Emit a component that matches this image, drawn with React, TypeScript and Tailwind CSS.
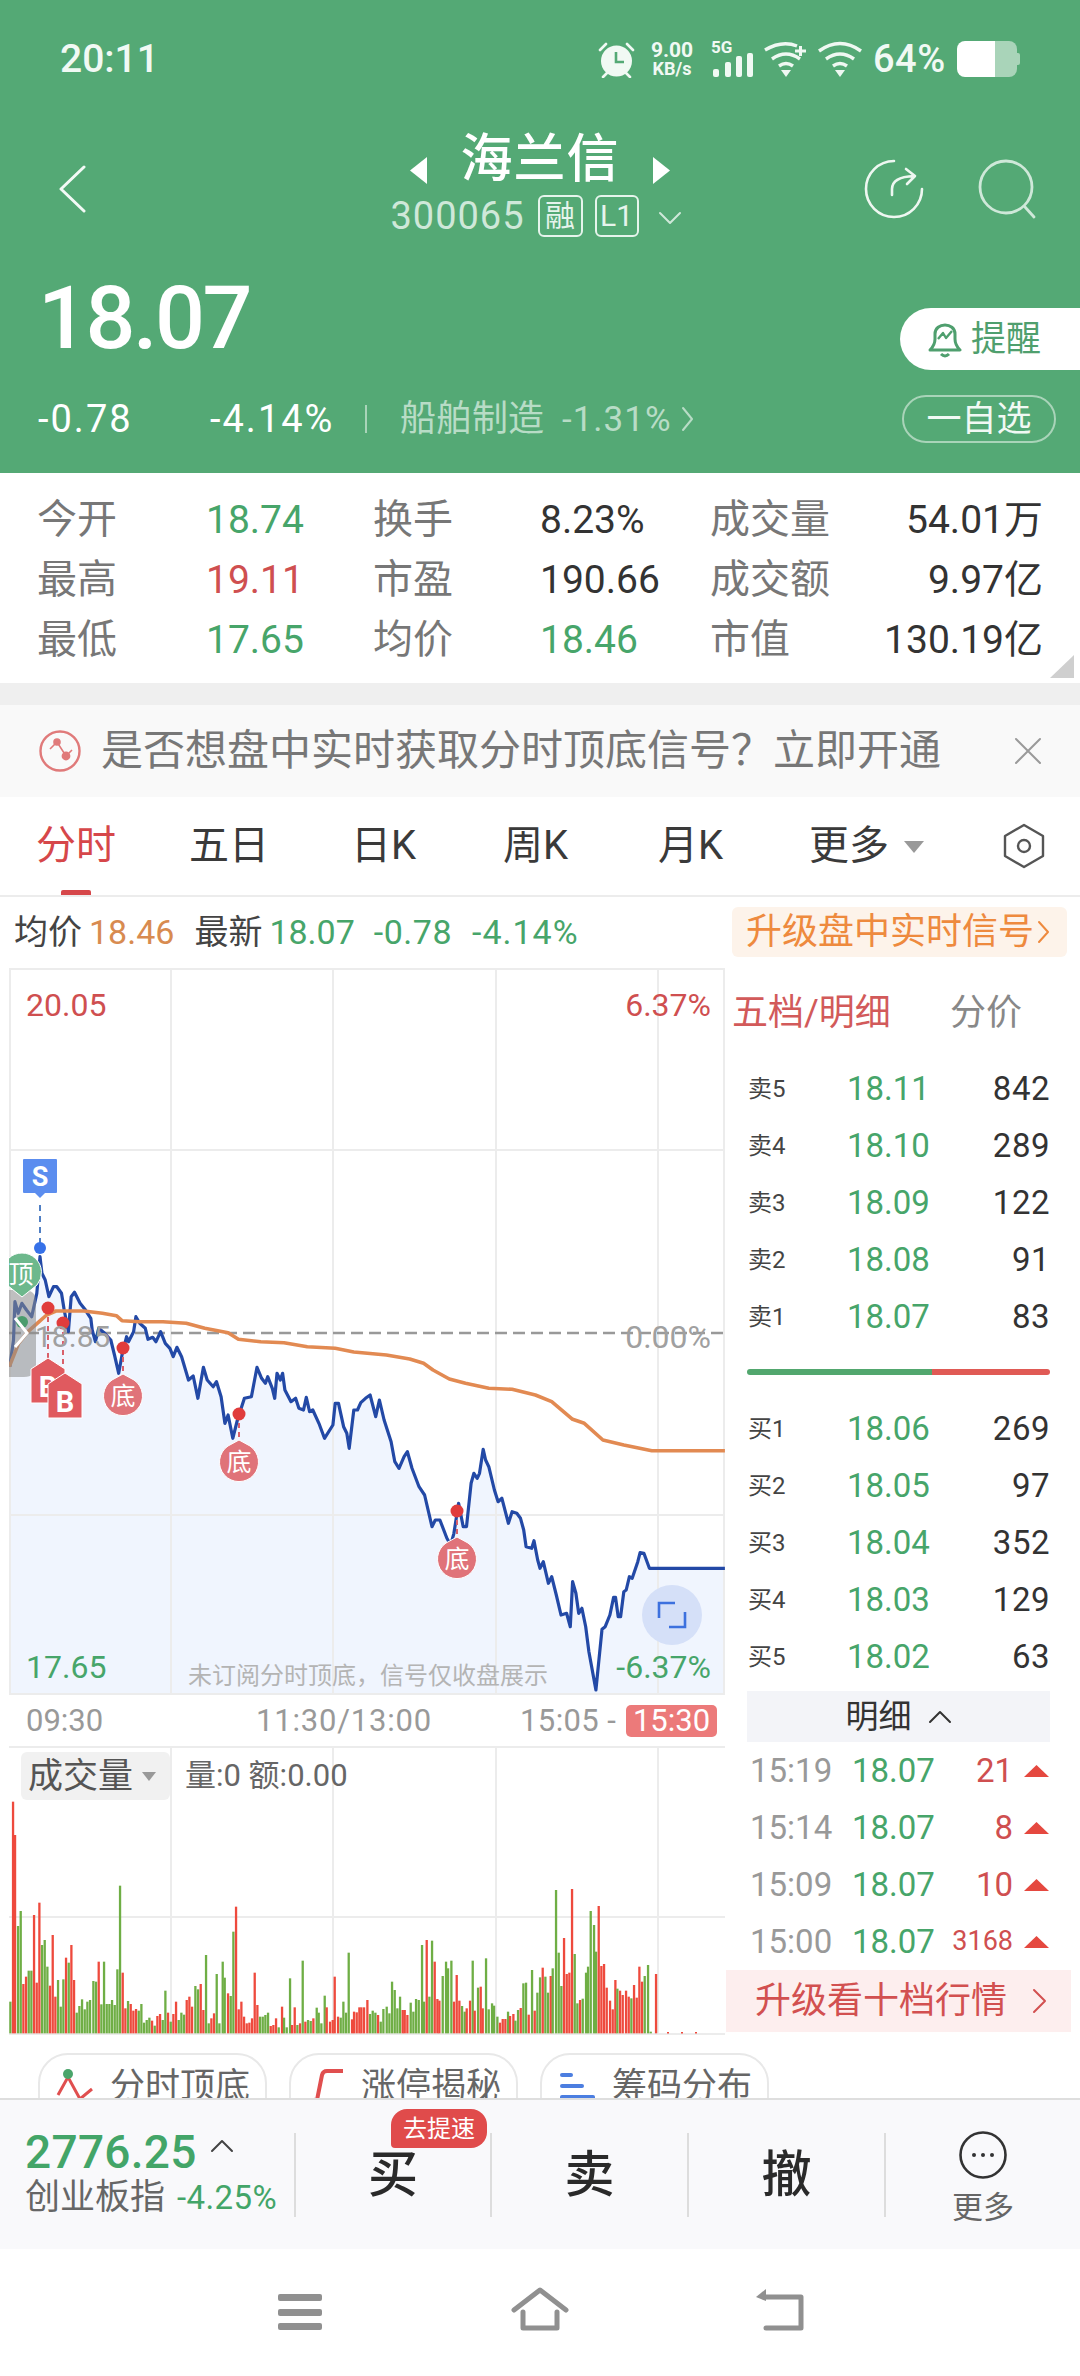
import type { FC, ReactNode } from 'react'

const GREEN = 'text-[#47a56a]'
const RED = 'text-[#cf4f50]'

// Intraday price and average curves, in plot units (x / 2.148, y / 3 + 1260 gives pixels)
const PRICE: [number, number][] = [
    [21, 320], [29, 240], [32, 125], [39, 160], [47, 130], [57, 150], [68, 170], [79, 100], [86, -10], [90, 40], [97, 60], [105, 110], [115, 80],
    [122, 80], [132, 100], [138, 150], [147, 215], [153, 110], [160, 97], [172, 130], [182, 147], [195, 175], [198, 210], [205, 245], [212, 205],
    [225, 220], [238, 240], [246, 285], [255, 340], [262, 285], [272, 230], [276, 245], [287, 215], [292, 170], [300, 190], [312, 205], [318, 238],
    [328, 232], [335, 245], [345, 215], [355, 250], [365, 265], [372, 290], [380, 262], [390, 290], [405, 360], [415, 348], [425, 415], [437, 322],
    [445, 360], [458, 380], [465, 365], [475, 410], [483, 490], [490, 465], [500, 535], [510, 480], [525, 415], [540, 410], [552, 322], [562, 355],
    [570, 370], [575, 350], [585, 385], [590, 415], [595, 340], [602, 360], [607, 340], [612, 390], [625, 425], [635, 415], [642, 445], [652, 450],
    [658, 412], [665, 455], [672, 450], [685, 490], [697, 535], [715, 495], [720, 430], [727, 430], [738, 500], [745, 520], [750, 565], [760, 450],
    [768, 450], [775, 428], [785, 415], [795, 405], [807, 470], [815, 420], [825, 480], [840, 545], [848, 605], [857, 625], [868, 590], [875, 575],
    [885, 625], [900, 680], [912, 705], [928, 800], [935, 780], [945, 780], [960, 835], [968, 855], [975, 820], [985, 730], [995, 800], [1002, 800],
    [1012, 670], [1018, 640], [1025, 655], [1030, 640], [1038, 568], [1043, 600], [1050, 620], [1062, 690], [1070, 725], [1078, 715], [1092, 790],
    [1100, 755], [1110, 760], [1118, 775], [1125, 810], [1130, 860], [1142, 865], [1147, 842], [1155, 900], [1160, 925], [1167, 905], [1178, 970],
    [1185, 950], [1195, 1005], [1205, 1065], [1217, 1060], [1225, 1100], [1230, 965], [1237, 1000], [1243, 1060], [1250, 1045], [1258, 1100],
    [1265, 1175], [1280, 1290], [1293, 1108], [1300, 1100], [1310, 1065], [1318, 1012], [1322, 1012], [1328, 1070], [1333, 1070], [1340, 995],
    [1345, 990], [1352, 950], [1358, 955], [1370, 905], [1375, 878], [1383, 880], [1395, 925], [1557, 925],
]

const AVERAGE: [number, number][] = [
    [20, 320], [40, 250], [60, 215], [80, 190], [100, 165], [120, 153], [180, 153], [220, 160], [250, 167], [262, 182], [300, 185], [350, 185],
    [400, 190], [440, 205], [490, 218], [512, 238], [560, 245], [610, 248], [660, 260], [720, 265], [760, 276], [830, 285], [880, 297], [910, 310],
    [930, 330], [965, 357], [1000, 370], [1050, 385], [1100, 388], [1150, 405], [1185, 425], [1230, 478], [1255, 490], [1295, 540], [1340, 555],
    [1400, 572], [1557, 572],
]

// Volume bars as colour, x and top edge, in thirds of a pixel from (0, 1720)
const VOLUME = `g31,845 r39,245 r45,345 g54,618 g62,573 r70,792 r78,770 g86,752 g94,752 r102,585 r110,788 r118,548 g126,675 g134,660 g142,740
r150,797 r158,645 r166,830 g174,780 g182,860 g190,778 r198,713 g206,728 r214,675 r222,780 g230,878 g238,858 g246,838 g254,868 g262,845 g270,840
g280,783 g288,785 r296,725 g304,853 g312,725 g320,852 g328,852 g336,840 g344,855 g352,748 g360,497 r368,758 r376,865 g384,843 r392,852 r400,872
r408,867 g416,872 g424,852 g432,908 g440,900 g448,893 r456,902 g464,917 r472,888 r480,882 g488,900 g496,812 r504,878 g512,905 r520,882 r528,845
g536,900 g544,878 g552,884 r560,840 r568,830 r576,860 g586,798 g594,808 r602,792 r610,870 g618,705 g626,910 r634,895 r642,880 g650,762 g658,910
g668,725 g674,773 r684,820 g692,828 g700,635 r708,560 r716,868 r724,845 r732,890 r740,910 r748,908 r756,895 r764,758 r772,855 g780,890 g788,890
g796,885 g804,878 r812,918 r820,915 r828,895 g836,922 r846,860 g852,893 g860,922 g870,775 r876,915 r884,862 g892,915 r900,910 g908,722 r916,905
g924,900 g932,903 r940,895 g950,863 g956,878 g964,910 g974,827 r980,862 r990,905 r998,900 r1004,770 r1014,890 g1022,893 g1030,845 g1038,878
g1046,698 r1056,898 r1062,875 r1070,877 r1078,862 r1084,862 r1092,862 r1102,840 g1110,882 g1118,872 g1126,878 r1134,885 g1142,905 g1150,867
g1160,860 g1168,880 g1176,785 g1184,810 g1192,865 g1200,830 r1208,870 r1214,870 r1222,885 g1232,848 g1240,875 g1248,837 g1256,840 g1266,675
g1272,845 r1280,660 g1288,830 g1296,662 r1304,725 r1312,837 r1318,842 g1328,768 g1338,725 g1344,745 g1354,722 r1362,845 r1370,765 r1378,842
g1386,858 g1394,875 r1400,865 r1410,842 g1418,722 r1424,872 g1434,803 r1442,800 r1448,865 g1458,715 g1466,868 g1476,850 g1482,857 g1492,890
r1500,908 r1508,897 r1516,897 g1524,875 r1530,888 r1540,882 g1546,902 g1554,870 r1562,864 g1570,790 g1578,788 r1586,884 g1596,750 r1604,872
g1612,818 g1620,772 r1628,743 g1636,770 g1644,818 r1652,768 g1658,745 g1668,510 g1676,698 g1684,798 r1692,654 r1700,762 r1708,758 r1716,507
g1724,702 g1732,850 r1740,840 g1748,836 g1758,758 g1764,740 g1772,573 g1782,615 g1788,695 r1796,558 r1804,738 r1812,732 r1820,803 r1830,842
r1838,868 r1846,780 g1852,806 r1860,812 r1868,825 r1878,812 r1886,830 g1894,835 r1902,795 r1910,833 r1918,740 r1926,785 g1934,768 g1944,735
g1952,935 r1968,762`
    .split(/\s+/)
    .map((bar) => {
        const [x, top] = bar.slice(1).split(',').map(Number)
        return { up: bar[0] === 'r', x, top }
    })

const plot = (points: [number, number][]) => points.map(([x, y]) => `${(x / 2.148).toFixed(1)},${(1260 + y / 3).toFixed(1)}`)

const Triangle: FC<{ dir: 'left' | 'right' | 'up' | 'down'; w: number; h: number; className?: string }> = ({ dir, w, h, className }) => {
    const points = {
        left: `${w},0 ${w},${h} 0,${h / 2}`,
        right: `0,0 0,${h} ${w},${h / 2}`,
        up: `0,${h} ${w},${h} ${w / 2},0`,
        down: `0,0 ${w},0 ${w / 2},${h}`,
    }[dir]
    return (
        <svg width={w} height={h} viewBox={`0 0 ${w} ${h}`} className={className}>
            <polygon points={points} fill="currentColor" strokeLinejoin="round" />
        </svg>
    )
}

const Chevron: FC<{ w: number; h: number; d: string; width?: number; className?: string }> = ({ w, h, d, width = 2, className }) => (
    <svg width={w} height={h} viewBox={`0 0 ${w} ${h}`} fill="none" stroke="currentColor" strokeWidth={width} strokeLinecap="round" strokeLinejoin="round" className={className}>
        <path d={d} />
    </svg>
)

const Wifi: FC<{ plus?: boolean }> = ({ plus }) => (
    <svg width="44" height="36" viewBox="0 0 44 36" fill="none" stroke="#eff8f2" strokeWidth="3.4" className="shrink-0">
        <path d={plus ? 'M1 9 Q18 -1 33 5' : 'M1 10 Q22 -5 43 10'} />
        <path d="M8 18 Q22 8 36 18" />
        <path d="M15 25 Q22 20 29 25" />
        <polygon points="17,29 27,29 22,36" fill="#eff8f2" stroke="none" />
        {plus && <path d="M31 10 H42 M36.5 5 V15" strokeWidth="3" />}
    </svg>
)

const StatusBar = () => (
    <div className="mt-[40px] flex h-[38px] items-center pr-[60px] pl-[60px] text-[#f1f9f4]">
        <span className="text-[39px] leading-none font-medium">20:11</span>
        <svg width="37" height="37" viewBox="0 0 37 37" className="ml-auto shrink-0">
            <circle cx="18.5" cy="20" r="15.5" fill="#f1f9f4" />
            <path d="M18 11 V21 H26" fill="none" stroke="#54a975" strokeWidth="2.6" />
            <path d="M2 9 L8 3 M35 9 L29 3 M5 36 L9 32 M32 36 L28 32" stroke="#f1f9f4" strokeWidth="2.6" strokeLinecap="round" />
        </svg>
        <div className="ml-[15px] flex w-[44px] flex-col items-center font-bold">
            <span className="text-[21px] leading-[20px]">9.00</span>
            <span className="text-[18px] leading-[18px]">KB/s</span>
        </div>
        <div className="relative ml-[17px] h-[36px] w-[42px]">
            <span className="absolute -top-[2px] left-0 text-[17px] leading-[17px] font-bold">5G</span>
            <svg width="40" height="24" viewBox="0 0 40 24" className="absolute right-0 bottom-0" fill="#f1f9f4">
                <rect x="0" y="16" width="6" height="8" rx="2" />
                <rect x="12" y="9" width="6" height="15" rx="2" />
                <rect x="23" y="3" width="6" height="21" rx="2" />
                <rect x="34" y="0" width="6" height="24" rx="2" />
            </svg>
        </div>
        <div className="ml-[11px]">
            <Wifi plus />
        </div>
        <div className="ml-[10px]">
            <Wifi />
        </div>
        <span className="ml-[11px] w-[74px] text-[38px] leading-none font-medium tracking-[0.5px] whitespace-nowrap">64%</span>
        <div className="ml-[10px] flex items-center">
            <div className="flex h-[36px] w-[60px] overflow-hidden rounded-[8px]">
                <div className="w-[38px] bg-white" />
                <div className="flex-1 bg-[#a9d4b9]" />
            </div>
            <div className="h-[12px] w-[3px] rounded-r-[2px] bg-[#a9d4b9]" />
        </div>
    </div>
)

const Header = () => (
    <header className="flex h-[473px] flex-col bg-[#54a975] text-white">
        <StatusBar />
        <div className="mt-[54px] flex h-[105px]">
            <div className="flex w-[200px] items-start pt-[33px] pl-[58px]">
                <Chevron w={28} h={48} d="M26 2 L3 24 L26 46" width={3} className="text-[#f3faf6]" />
            </div>
            <div className="flex flex-1 flex-col items-center">
                <div className="flex h-[63px] items-center">
                    <Triangle dir="left" w={17} h={27} className="mt-[13px] mr-[33px]" />
                    <span className="mb-[8px] text-[52px] leading-none font-medium tracking-[1px]">海兰信</span>
                    <Triangle dir="right" w={17} h={27} className="mt-[13px] ml-[33px]" />
                </div>
                <div className="flex h-[42px] items-center pr-[8px] text-[#cfe8d9]">
                    <span className="text-[38px] leading-none tracking-[1px]">300065</span>
                    <span className="ml-[13px] flex h-[42px] w-[45px] items-center justify-center rounded-[6px] border-2 border-[#e6f4ec] text-[30px] leading-none text-[#e6f4ec]">融</span>
                    <span className="ml-[12px] flex h-[42px] w-[44px] items-center justify-center rounded-[6px] border-2 border-[#e6f4ec] text-[30px] leading-none text-[#e6f4ec]">L1</span>
                    <Chevron w={24} h={14} d="M2 2 L12 12 L22 2" className="mt-[4px] ml-[19px]" />
                </div>
            </div>
            <div className="flex w-[200px] justify-end gap-[54px] pt-[27px] pr-[44px]">
                <svg width="60" height="60" viewBox="0 0 60 60" fill="none" stroke="#eef7f1" strokeWidth="2.6" strokeLinecap="round" strokeLinejoin="round" className="shrink-0">
                    <path d="M30 2 A28 28 0 1 0 58 30" />
                    <path d="M28 36 V30 Q28 18 50 17 M42 10 L51 17 L43 25" />
                </svg>
                <svg width="58" height="60" viewBox="0 0 58 60" fill="none" stroke="#cfe8d9" strokeWidth="2.8" strokeLinecap="round" className="shrink-0">
                    <circle cx="28" cy="28" r="26" />
                    <path d="M47 48 L56 58" />
                </svg>
            </div>
        </div>
        <div className="mt-[33px] flex h-[115px] items-start">
            <span className="mt-[-2px] pl-[38px] text-[88px] leading-[100px] font-medium tracking-[-2.5px]">18.07</span>
            <div className="mt-[38px] ml-auto flex h-[62px] w-[180px] items-center rounded-l-[31px] bg-white pl-[28px] text-[#4f9f6e]">
                <svg width="34" height="40" viewBox="0 0 34 40" fill="none" stroke="currentColor" strokeWidth="3" strokeLinejoin="round">
                    <path d="M2 31 Q7 26 7 20 V15 C7 3 27 3 27 15 V20 Q27 26 32 31 Z" />
                    <path d="M10 20 L15 14 L18 19 L24 12" strokeWidth="2.4" />
                    <path d="M13 35 Q17 39 21 35" />
                </svg>
                <span className="ml-[9px] text-[35px] leading-none">提醒</span>
            </div>
        </div>
        <div className="mt-[10px] flex h-[48px] items-center pl-[38px]">
            <span className="w-[172px] text-[38px] leading-none tracking-[2px]">-0.78</span>
            <span className="w-[155px] text-[38px] leading-none tracking-[2px]">-4.14%</span>
            <div className="h-[28px] w-[2px] bg-[#a9d4b9]" />
            <div className="ml-[33px] flex items-center text-[#b8dcc6]">
                <span className="text-[36px] leading-none">船舶制造</span>
                <span className="ml-[18px] text-[35px] leading-none tracking-[1px]">-1.31%</span>
                <Chevron w={13} h={28} d="M2 3 L11 14 L2 25" className="ml-[9px]" />
            </div>
            <div className="mr-[24px] ml-auto flex h-[48px] w-[154px] items-center justify-center rounded-[24px] border-2 border-[#a9d4b9] text-[#f1f9f4]">
                <span className="text-[35px] leading-none">一自选</span>
            </div>
        </div>
    </header>
)

const STATS: [string, string, string, string, string, string, string, string][] = [
    ['今开', '18.74', GREEN, '换手', '8.23%', 'text-[#333]', '成交量', '54.01万'],
    ['最高', '19.11', RED, '市盈', '190.66', 'text-[#333]', '成交额', '9.97亿'],
    ['最低', '17.65', GREEN, '均价', '18.46', GREEN, '市值', '130.19亿'],
]

const Stats = () => (
    <section className="relative h-[210px] bg-white pt-[17px] pl-[37px] text-[39px] leading-[60px]">
        {STATS.map(([l1, v1, c1, l2, v2, c2, l3, v3]) => (
            <div key={l1} className="grid h-[60px] w-[1006px] grid-cols-[169px_167px_167px_170px_100px_233px]">
                <span className="text-[40px] text-[#777]">{l1}</span>
                <span className={c1}>{v1}</span>
                <span className="text-[40px] text-[#777]">{l2}</span>
                <span className={c2}>{v2}</span>
                <span className="text-[40px] whitespace-nowrap text-[#777]">{l3}</span>
                <span className="text-right text-[#333]">{v3}</span>
            </div>
        ))}
        <svg width="24" height="23" viewBox="0 0 24 23" className="absolute right-[6px] bottom-[5px] text-[#cfcfcf]">
            <polygon points="24,0 24,23 0,23" fill="currentColor" />
        </svg>
    </section>
)

const Banner = () => (
    <div className="flex h-[92px] items-center bg-[#f9f9f9] pl-[39px]">
        <svg width="42" height="42" viewBox="0 0 42 42" fill="none" stroke="#e07a7a" strokeWidth="2.4" className="shrink-0">
            <circle cx="21" cy="21" r="19.5" />
            <path d="M11 19 L18 12 L27 26 L33 20" strokeWidth="1.6" />
            <circle cx="18" cy="12" r="2.6" fill="#e07a7a" />
            <circle cx="27" cy="26" r="3.2" fill="#e07a7a" />
        </svg>
        <span className="ml-[20px] text-[42px] leading-none whitespace-nowrap text-[#777]">是否想盘中实时获取分时顶底信号？立即开通</span>
        <Chevron w={28} h={28} d="M2 2 L26 26 M26 2 L2 26" className="ml-[73px] text-[#9a9a9a]" />
    </div>
)

const TABS: [string, string][] = [
    ['五日', 'w-[162px]'],
    ['日K', 'w-[152px]'],
    ['周K', 'w-[155px]'],
    ['月K', 'w-[151px]'],
]

const Tabs = () => (
    <nav className="relative flex h-[100px] items-center border-b-2 border-[#ececec] bg-white pl-[36px] text-[40px] leading-none text-[#3a3a3a]">
        <span className="w-[153px] text-[#d6474a]">分时</span>
        {TABS.map(([label, width]) => (
            <span key={label} className={width}>
                {label}
            </span>
        ))}
        <span>更多</span>
        <Triangle dir="down" w={20} h={12} className="mt-[2px] ml-[15px] text-[#999]" />
        <svg width="42" height="46" viewBox="0 0 42 46" fill="none" stroke="#555" strokeWidth="2.4" strokeLinejoin="round" className="ml-[79px] shrink-0">
            <polygon points="21,2 40,13 40,33 21,44 2,33 2,13" />
            <circle cx="21" cy="23" r="6" />
        </svg>
        <div className="absolute bottom-0 left-[61px] h-[5px] w-[30px] rounded-t-[2px] bg-[#d6474a]" />
    </nav>
)

const QuoteLine = () => (
    <div className="flex h-[71px] items-center pb-[2px] pl-[14px] text-[34px] leading-none">
        <span className="text-[#444]">均价</span>
        <span className="ml-[7px] text-[#d88b50]">18.46</span>
        <span className="ml-[20px] text-[#444]">最新</span>
        <span className={`ml-[7px] ${GREEN}`}>18.07</span>
        <span className={`ml-[19px] tracking-[0.5px] ${GREEN}`}>-0.78</span>
        <span className={`ml-[20px] tracking-[1px] ${GREEN}`}>-4.14%</span>
        <div className="mr-[13px] ml-auto flex h-[50px] w-[335px] items-center rounded-[6px] bg-[#fdf3ea] pl-[14px] text-[#ee8a3e]">
            <span className="text-[36px] whitespace-nowrap">升级盘中实时信号</span>
            <Chevron w={13} h={26} d="M2 3 L11 13 L2 23" className="ml-[3px]" />
        </div>
    </div>
)

const BottomDrop: FC<{ x: number; y: number }> = ({ x, y }) => (
    <g>
        <path d={`M${x} ${y - 22} L${x + 11} ${y - 16} A19.5 19.5 0 1 1 ${x - 11} ${y - 16} Z`} fill="#e07379" stroke="#fff" strokeWidth="1" />
        <text x={x} y={y + 9} textAnchor="middle" fontSize="25" fill="#fff">
            底
        </text>
    </g>
)

const BuyFlag: FC<{ x: number; y: number }> = ({ x, y }) => (
    <g>
        <path d={`M${x - 17} ${y + 5} L${x} ${y - 6} L${x + 17} ${y + 5} V${y + 39} H${x - 17} Z`} fill="#e05a5f" stroke="#fff" strokeWidth="1" />
        <text x={x} y={y + 33} textAnchor="middle" fontSize="29" fontWeight="700" fill="#fff">
            B
        </text>
    </g>
)

const RedDot: FC<{ x: number; y: number; to: number }> = ({ x, y, to }) => (
    <g>
        <line x1={x} y1={y} x2={x} y2={to} stroke="#d9606a" strokeWidth="2" strokeDasharray="5 4" />
        <circle cx={x} cy={y} r="6.5" fill="#e03c3c" />
    </g>
)

const GRID_X = [171, 333, 496, 658]

const PriceChart = () => {
    const line = plot(PRICE)
    const fill = `${line.join(' ')} 724.9,1695 9.8,1695`
    return (
        <div className="relative h-[727px] w-[716px]">
            <svg width="716" height="727" viewBox="9 968 716 727" className="absolute inset-0 text-[#ececec]">
                <polygon points={fill} fill="#f0f5fe" />
                {GRID_X.map((x) => (
                    <line key={x} x1={x} y1={968} x2={x} y2={1695} stroke="currentColor" strokeWidth="2" />
                ))}
                <rect x="10" y="969" width="714" height="725" fill="none" stroke="currentColor" strokeWidth="2" />
                <line x1="9" y1="1150" x2="725" y2="1150" stroke="currentColor" strokeWidth="2" />
                <line x1="9" y1="1515" x2="725" y2="1515" stroke="currentColor" strokeWidth="2" />
                <line x1="9" y1="1333" x2="725" y2="1333" stroke="#999" strokeWidth="2.4" strokeDasharray="12 6" />
                <polyline points={line.join(' ')} fill="none" stroke="#2349a6" strokeWidth="3.2" strokeLinejoin="round" />
                <polyline points={plot(AVERAGE).join(' ')} fill="none" stroke="#e28a52" strokeWidth="3.6" strokeLinejoin="round" />

                <path d="M9 1290 H24 Q36 1290 36 1302 V1365 Q36 1377 24 1377 H9 Z" fill="#8a8a8a" fillOpacity="0.55" />
                <circle cx="22" cy="1322" r="6" fill="#4a9c6d" />
                <path d="M15 1318 L27 1333 L15 1347" fill="none" stroke="#fff" strokeWidth="3" />

                <path d="M22 1297 L7 1285 A19.5 19.5 0 1 1 37 1285 Z" fill="#6db88c" stroke="#fff" strokeWidth="1" />
                <text x="21" y="1283" textAnchor="middle" fontSize="25" fill="#fff">
                    顶
                </text>

                <rect x="23" y="1159" width="34" height="34" rx="1" fill="#5b8def" />
                <polygon points="35,1193 45,1193 40,1198" fill="#5b8def" />
                <text x="40" y="1186" textAnchor="middle" fontSize="27" fontWeight="700" fill="#fff">
                    S
                </text>
                <line x1="40" y1="1205" x2="40" y2="1244" stroke="#4f7fc4" strokeWidth="2" strokeDasharray="6 5" />
                <circle cx="40" cy="1248" r="6" fill="#3671e8" />

                <RedDot x={48} y={1308} to={1362} />
                <RedDot x={63} y={1323} to={1372} />
                <BuyFlag x={48} y={1364} />
                <BuyFlag x={65} y={1379} />
                <RedDot x={123} y={1348} to={1376} />
                <RedDot x={239} y={1414} to={1440} />
                <RedDot x={457} y={1511} to={1538} />
                <BottomDrop x={123} y={1396} />
                <BottomDrop x={239} y={1462} />
                <BottomDrop x={457} y={1559} />

                <circle cx="672" cy="1615" r="30" fill="#d5e0f8" />
                <path d="M675 1603 H659 V1618 M669 1627 H685 V1612" fill="none" stroke="#3d71de" strokeWidth="2.6" />
            </svg>
            <span className={`absolute top-[18px] left-[17px] text-[32px] leading-[38px] ${RED}`}>20.05</span>
            <span className={`absolute top-[18px] right-[14px] text-[32px] leading-[38px] ${RED}`}>6.37%</span>
            <span className="absolute top-[350px] left-[26px] text-[30px] leading-[38px] text-[#a0a0a0]">18.85</span>
            <span className="absolute top-[350px] right-[14px] text-[32px] leading-[38px] text-[#a0a0a0]">0.00%</span>
            <span className={`absolute top-[680px] left-[17px] text-[32px] leading-[38px] ${GREEN}`}>17.65</span>
            <span className={`absolute top-[680px] right-[14px] text-[32px] leading-[38px] ${GREEN}`}>-6.37%</span>
            <span className="absolute top-[694px] left-[179px] text-[24px] leading-[28px] whitespace-nowrap text-[#b4b4b4]">未订阅分时顶底，信号仅收盘展示</span>
        </div>
    )
}

const TimeAxis = () => (
    <div className="flex h-[51px] items-center text-[31px] leading-none text-[#999]">
        <span className="w-[247px] pl-[17px]">09:30</span>
        <span className="w-[264px] tracking-[0.8px]">11:30/13:00</span>
        <span className="w-[106px] tracking-[0.4px] whitespace-nowrap">15:05 -</span>
        <span className="flex h-[32px] w-[91px] items-center justify-center rounded-[5px] bg-[#ec7a7a] text-[31px] text-white">15:30</span>
    </div>
)

const VolumeChart = () => (
    <div className="relative h-[290px] w-[716px]">
        <svg width="716" height="290" viewBox="9 1746 716 290" className="absolute inset-0 text-[#ececec]">
            <line x1="9" y1="1747" x2="725" y2="1747" stroke="currentColor" strokeWidth="2" />
            <line x1="9" y1="1917" x2="725" y2="1917" stroke="currentColor" strokeWidth="2" />
            <line x1="9" y1="2034" x2="725" y2="2034" stroke="currentColor" strokeWidth="2" />
            {GRID_X.map((x) => (
                <line key={x} x1={x} y1={1746} x2={x} y2={2033} stroke="currentColor" strokeWidth="2" />
            ))}
            {VOLUME.map((bar) => (
                <rect key={bar.x} x={bar.x / 3 - 1.1} y={1720 + bar.top / 3} width="2.3" height={(940 - bar.top) / 3} fill={bar.up ? '#ee4a3d' : '#6fae45'} />
            ))}
            <rect x="667" y="2032" width="2" height="1.5" fill="#ee4a3d" />
            <rect x="681" y="2032" width="2" height="1.5" fill="#ee4a3d" />
            <rect x="695" y="2032" width="2" height="1.5" fill="#ee4a3d" />
        </svg>
        <div className="absolute top-[6px] left-[12px] flex h-[48px] w-[149px] items-center rounded-[6px] bg-[#f1f1f1] pl-[7px] text-[35px] leading-none text-[#555]">
            成交量
            <Triangle dir="down" w={14} h={9} className="ml-[9px] text-[#999]" />
        </div>
        <span className="absolute top-[12px] left-[176px] text-[31px] leading-[36px] whitespace-nowrap text-[#666]">量:0 额:0.00</span>
    </div>
)

const SELLS: [string, string, string][] = [
    ['卖5', '18.11', '842'],
    ['卖4', '18.10', '289'],
    ['卖3', '18.09', '122'],
    ['卖2', '18.08', '91'],
    ['卖1', '18.07', '83'],
]

const BUYS: [string, string, string][] = [
    ['买1', '18.06', '269'],
    ['买2', '18.05', '97'],
    ['买3', '18.04', '352'],
    ['买4', '18.03', '129'],
    ['买5', '18.02', '63'],
]

const TRADES: [string, string, string][] = [
    ['15:19', '21', 'text-[33px]'],
    ['15:14', '8', 'text-[33px]'],
    ['15:09', '10', 'text-[33px]'],
    ['15:00', '3168', 'text-[27px]'],
]

const BookRow: FC<{ row: [string, string, string] }> = ({ row: [label, price, qty] }) => (
    <div className="flex h-[57px] items-center pr-[21px] pl-[22px]">
        <span className="w-[99px] text-[24px] leading-none text-[#444]">{label}</span>
        <span className={`text-[33px] leading-none ${GREEN}`}>{price}</span>
        <span className="ml-auto text-[33px] leading-none tracking-[0.5px] text-[#333]">{qty}</span>
    </div>
)

const OrderBook = () => (
    <aside className="flex w-[345px] flex-col">
        <div className="flex h-[92px] items-start pt-[29px] pl-[6px] text-[36px] leading-[32px]">
            <span className="w-[218px] whitespace-nowrap text-[#d25a5a]">五档/明细</span>
            <span className="text-[#888]">分价</span>
        </div>
        {SELLS.map((row) => (
            <BookRow key={row[0]} row={row} />
        ))}
        <div className="mt-[24px] mr-[21px] ml-[21px] mb-[25px] flex h-[6px] overflow-hidden rounded-[3px]">
            <div className="w-[185px] bg-[#52a76e]" />
            <div className="flex-1 bg-[#e05a55]" />
        </div>
        {BUYS.map((row) => (
            <BookRow key={row[0]} row={row} />
        ))}
        <div className="mt-[6px] mr-[21px] ml-[21px] flex h-[51px] items-center justify-center bg-[#f3f4f8] text-[33px] leading-none text-[#333]">
            明细
            <Chevron w={24} h={14} d="M2 12 L12 2 L22 12" className="ml-[16px]" />
        </div>
        {TRADES.map(([time, qty, size]) => (
            <div key={time} className="flex h-[57px] items-center pr-[22px] pl-[24px] text-[33px] leading-none">
                <span className="w-[102px] text-[#999]">{time}</span>
                <span className={GREEN}>18.07</span>
                <span className={`ml-auto ${size} ${RED}`}>{qty}</span>
                <Triangle dir="up" w={25} h={12} className="ml-[11px] text-[#e5483f]" />
            </div>
        ))}
        <div className="flex h-[62px] items-center bg-[#fdeeee] pl-[29px] text-[36px] leading-none text-[#d25050]">
            <span className="whitespace-nowrap">升级看十档行情</span>
            <Chevron w={15} h={26} d="M2 2 L13 13 L2 24" className="ml-[25px]" />
        </div>
    </aside>
)

const Chip: FC<{ icon: ReactNode; label: string }> = ({ icon, label }) => (
    <div className="flex h-[70px] w-[229px] shrink-0 items-center rounded-t-[30px] border-2 border-[#e8e8e8] pb-[3px] pl-[16px]">
        {icon}
        <span className="ml-[17px] text-[35px] leading-none whitespace-nowrap text-[#666]">{label}</span>
    </div>
)

const Chips = () => (
    <div className="h-[62px] overflow-hidden pt-[17px]">
        <div className="flex gap-[22px] pl-[38px]">
            <Chip
                label="分时顶底"
                icon={
                    <svg width="37" height="36" viewBox="0 0 37 36" fill="none" stroke="#e04f4f" strokeWidth="3" className="shrink-0">
                        <path d="M2 26 L12 8 L24 30 L36 20" />
                        <circle cx="12" cy="5" r="5" fill="#4aa56b" stroke="none" />
                    </svg>
                }
            />
            <Chip
                label="涨停揭秘"
                icon={
                    <svg width="37" height="36" viewBox="0 0 37 36" fill="none" stroke="#e04f4f" strokeWidth="4" className="shrink-0">
                        <path d="M3 36 L7 32 L9 36 L15 6 Q16 2 20 2 H36" />
                    </svg>
                }
            />
            <Chip
                label="筹码分布"
                icon={
                    <svg width="37" height="36" viewBox="0 0 37 36" fill="#4c7ee0" className="shrink-0">
                        <rect x="2" y="4" width="13" height="4" rx="2" />
                        <rect x="2" y="15" width="24" height="4" rx="2" />
                        <rect x="2" y="26" width="35" height="5" rx="2" />
                    </svg>
                }
            />
        </div>
    </div>
)

const ACTIONS = ['卖', '撤']

const TradeBar = () => (
    <div className="flex h-[151px] border-t-2 border-[#dedede] bg-[#f9f9fb] pt-[33px]">
        <div className="flex h-[84px] w-[294px] flex-col pl-[25px]">
            <div className="flex h-[38px] items-center">
                <span className="text-[46px] leading-none font-medium tracking-[0.3px] text-[#43a568]">2776.25</span>
                <Chevron w={24} h={14} d="M2 12 L12 2 L22 12" className="mb-[12px] ml-[13px] text-[#444]" />
            </div>
            <div className="mt-[8px] flex h-[36px] items-center">
                <span className="text-[35px] leading-none text-[#666]">创业板指</span>
                <span className="ml-[12px] text-[33px] leading-none tracking-[0.4px] text-[#43a568]">-4.25%</span>
            </div>
        </div>
        <div className="relative flex h-[84px] w-[196px] items-center justify-center border-l-2 border-[#dddddd] text-[50px] leading-none font-medium text-[#2a2a2a]">
            买
            <span className="absolute top-[-24px] left-[95px] flex h-[39px] w-[96px] items-center justify-center rounded-[16px] rounded-bl-[4px] bg-[#e04b4b] text-[24px] leading-none font-normal text-white">
                去提速
            </span>
        </div>
        {ACTIONS.map((label) => (
            <div key={label} className="flex h-[84px] w-[197px] items-center justify-center border-l-2 border-[#dddddd] text-[50px] leading-none font-medium text-[#2a2a2a]">
                {label}
            </div>
        ))}
        <div className="flex h-[84px] flex-1 flex-col items-center border-l-2 border-[#dddddd]">
            <svg width="48" height="48" viewBox="0 0 48 48" className="mt-[-2px] shrink-0" fill="#333">
                <circle cx="24" cy="24" r="22.5" fill="none" stroke="#333" strokeWidth="2.6" />
                <circle cx="15" cy="24" r="2" />
                <circle cx="24" cy="24" r="2" />
                <circle cx="33" cy="24" r="2" />
            </svg>
            <span className="mt-[12px] text-[31px] leading-[34px] text-[#666]">更多</span>
        </div>
    </div>
)

const NavBar = () => (
    <div className="flex flex-1 items-start pt-[38px] pl-[278px]">
        <svg width="44" height="36" viewBox="0 0 44 36" fill="#909090" className="mt-[7px] shrink-0">
            <rect x="0" y="0" width="44" height="7" rx="2" />
            <rect x="0" y="15" width="44" height="7" rx="2" />
            <rect x="0" y="29" width="44" height="7" rx="2" />
        </svg>
        <svg width="58" height="44" viewBox="0 0 58 44" fill="none" stroke="#909090" strokeWidth="5" strokeLinecap="round" strokeLinejoin="round" className="ml-[189px] shrink-0">
            <path d="M3 23 L29 3 L55 23" />
            <path d="M12 25 V41 H46 V25" />
        </svg>
        <svg width="48" height="44" viewBox="0 0 48 44" fill="none" stroke="#909090" strokeWidth="5" strokeLinejoin="round" className="ml-[187px] shrink-0">
            <path d="M8 10 H45 V41 H10" strokeLinecap="round" />
            <polygon points="0,10 10,2 10,14" fill="#909090" stroke="none" />
        </svg>
    </div>
)

const App = () => (
    <div className="flex h-[2376px] w-[1080px] flex-col overflow-hidden bg-white [font-family:Roboto,'Noto_Sans_CJK_SC',sans-serif]">
        <Header />
        <Stats />
        <div className="h-[22px] bg-[#efefef]" />
        <Banner />
        <Tabs />
        <QuoteLine />
        <main className="flex pl-[9px]">
            <div className="w-[717px] shrink-0">
                <PriceChart />
                <TimeAxis />
                <VolumeChart />
            </div>
            <OrderBook />
        </main>
        <Chips />
        <TradeBar />
        <NavBar />
    </div>
)

export default App
